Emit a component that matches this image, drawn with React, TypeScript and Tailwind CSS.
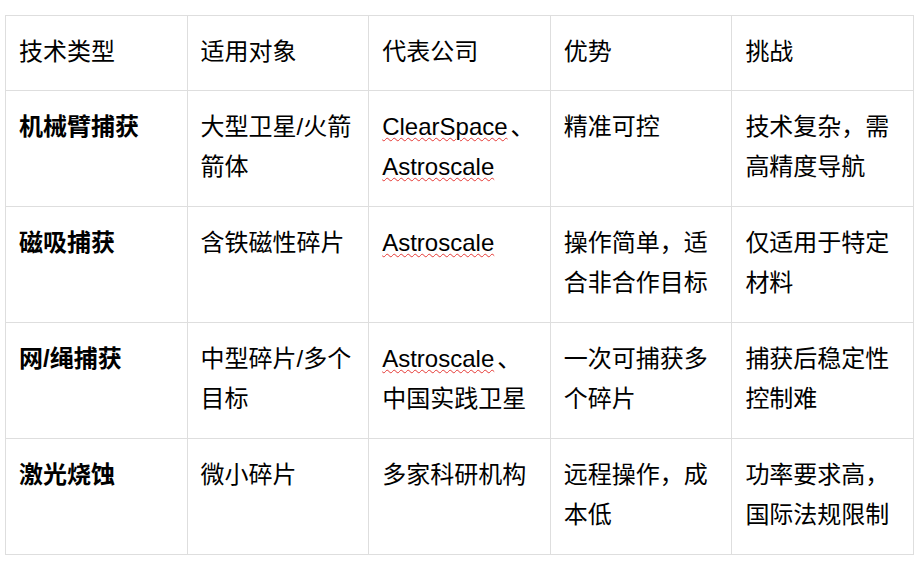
import React from 'react';

// rows of the comparison table; latin parts get the spell-check squiggle
const header = ['技术类型', '适用对象', '代表公司', '优势', '挑战'];

function Latin({ children }: { children: React.ReactNode }) {
  return (
    <span className="underline decoration-wavy decoration-[#e53935] decoration-1 underline-offset-[2px]">
      {children}
    </span>
  );
}

const rows: { type: string; target: string; company: React.ReactNode; pro: string; con: string }[] = [
  {
    type: '机械臂捕获',
    target: '大型卫星/火箭箭体',
    company: (
      <>
        <Latin>ClearSpace</Latin>
        <span className="ml-[3px]">、</span>
        <Latin>Astroscale</Latin>
      </>
    ),
    pro: '精准可控',
    con: '技术复杂，需高精度导航',
  },
  {
    type: '磁吸捕获',
    target: '含铁磁性碎片',
    company: <Latin>Astroscale</Latin>,
    pro: '操作简单，适合非合作目标',
    con: '仅适用于特定材料',
  },
  {
    type: '网/绳捕获',
    target: '中型碎片/多个目标',
    company: (
      <>
        <Latin>Astroscale</Latin>
        <span className="ml-[3px]">、</span>中国实践卫星
      </>
    ),
    pro: '一次可捕获多个碎片',
    con: '捕获后稳定性控制难',
  },
  {
    type: '激光烧蚀',
    target: '微小碎片',
    company: '多家科研机构',
    pro: '远程操作，成本低',
    con: '功率要求高，国际法规限制',
  },
];

const cellCls = 'border border-[#dedede] pl-[13px] pr-[8px] pt-[16px] align-top text-left';

export default function App() {
  return (
    <div className="w-[924px] h-[570px] bg-white pt-[15px] pl-[5px] font-['Liberation_Sans','Noto_Sans_CJK_SC',sans-serif] text-[24px] leading-[40px] text-black">
      <table className="w-[909px] table-fixed border-collapse">
        <thead>
          <tr>
            {header.map((h) => (
              <th key={h} className={`${cellCls} pb-[18px] font-normal`}>
                {h}
              </th>
            ))}
          </tr>
        </thead>
        <tbody>
          {rows.map((r) => (
            <tr key={r.type}>
              <td className={`${cellCls} pb-[19px] font-bold`}>{r.type}</td>
              <td className={`${cellCls} pb-[19px]`}>{r.target}</td>
              <td className={`${cellCls} pb-[19px]`}>{r.company}</td>
              <td className={`${cellCls} pb-[19px]`}>{r.pro}</td>
              <td className={`${cellCls} pb-[19px]`}>{r.con}</td>
            </tr>
          ))}
        </tbody>
      </table>
    </div>
  );
}
